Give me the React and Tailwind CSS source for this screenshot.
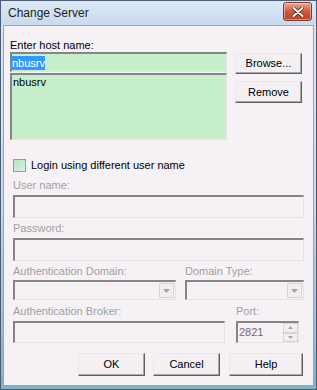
const sunken =
  'border-t-2 border-l-2 border-b border-r border-t-[#858585] border-l-[#858585] border-b-[#e6e2e5] border-r-[#e6e2e5]';

function Btn({ children, className = '' }) {
  return (
    <div
      className={`flex items-center justify-center border border-t-[#e9e9e9] border-l-[#e9e9e9] border-r-[#5e5e5e] border-b-[#5e5e5e] bg-[#f3eff2] shadow-[inset_-1px_-1px_0_#a9a9a9] text-[#000] ${className}`}
    >
      {children}
    </div>
  );
}

function Combo({ className = '' }) {
  return (
    <div className={`flex h-[20px] ${sunken} bg-[#f4f0f3] ${className}`}>
      <div className="flex-1" />
      <div className="m-[1px] flex w-[15px] items-center justify-center border border-[#d8d4d7] bg-[#f1eef0]">
        <svg width="7" height="4" viewBox="0 0 7 4">
          <path d="M0 0h7L3.5 4z" fill="#a5a5a5" />
        </svg>
      </div>
    </div>
  );
}

function Label({ children, className = '' }) {
  return <div className={`h-[14px] leading-[14px] text-[#a3a0a2] ${className}`}>{children}</div>;
}

export default function App() {
  return (
    <div className="h-[390px] w-[317px] overflow-hidden bg-[#c5d7ec] font-['Liberation_Sans',Arial,sans-serif] text-[11px]">
      <div className="flex h-full flex-col border border-[#4a5d75] bg-gradient-to-b from-[#dde8f5] via-[#c9daee] to-[#7fb3c8]">
        {/* title bar */}
        <div className="flex h-[24px] items-center bg-gradient-to-b from-[#dde8f5] to-[#c9daee] pl-[7px] pr-[4px]">
          <span className="flex-1 text-[12px] text-[#1e1e1e]">Change Server</span>
          <div className="mt-[-3px] flex h-[19px] w-[29px] items-center justify-center rounded-[3px] border border-[#7a3a30] bg-gradient-to-b from-[#e9a99c] via-[#d0573f] to-[#c14126] shadow-[inset_0_0_0_1px_rgba(255,255,255,0.4)]">
            <svg width="12" height="10" viewBox="0 0 12 10">
              <path d="M1.5 1l9 8M10.5 1l-9 8" stroke="#4a1a10" strokeWidth="3.4" strokeLinecap="round" />
              <path d="M1.5 1l9 8M10.5 1l-9 8" stroke="#fff" strokeWidth="2" strokeLinecap="round" />
            </svg>
          </div>
        </div>

        {/* client */}
        <div className="mx-[2px] mb-[3px] flex-1 border border-[#8fa5bf] bg-[#f5f1f4] pl-[6px] pr-[9px]">
          <div className="flex pt-[13px]">
            <div className="w-[217px]">
              <div className="h-[13px] leading-[13px] text-black">Enter host name:</div>
              <div className={`h-[20px] ${sunken} bg-[#c7eecb] pt-[1px]`}>
                <span className="inline-block bg-[#3399ff] leading-[14px] text-white">nbusrv</span>
              </div>
              <div className={`mt-[1px] h-[67px] ${sunken} bg-[#c7eecb] pl-[1px] leading-[14px] text-black`}>
                nbusrv
              </div>
            </div>
            <div className="ml-[8px] w-[67px] pt-[14px]">
              <Btn className="h-[21px]">Browse...</Btn>
              <Btn className="mt-[7px] h-[22px]">Remove</Btn>
            </div>
          </div>

          <div className="pl-[3px]">
            <div className="mt-[19px] flex h-[13px] items-center">
              <div className="h-[13px] w-[13px] border border-[#9a9a9a] bg-gradient-to-br from-[#b8e2c0] to-[#d6f3dc]" />
              <span className="ml-[5px] text-black">Login using different user name</span>
            </div>

            <Label className="mt-[6px]">User name:</Label>
            <div className={`mt-[3px] h-[23px] ${sunken}`} />

            <Label className="mt-[3px]">Password:</Label>
            <div className={`mt-[3px] h-[23px] ${sunken}`} />

            <div className="mt-[3px] flex">
              <div className="w-[163px]">
                <Label>Authentication Domain:</Label>
                <Combo className="mt-[2px]" />
              </div>
              <div className="ml-[9px] flex-1">
                <Label>Domain Type:</Label>
                <Combo className="mt-[2px]" />
              </div>
            </div>

            <div className="mt-[4px] flex">
              <div className="w-[212px]">
                <Label>Authentication Broker:</Label>
                <div className={`mt-[3px] h-[22px] ${sunken}`} />
              </div>
              <div className="ml-[11px] w-[63px]">
                <Label>Port:</Label>
                <div className={`mt-[3px] flex h-[22px] ${sunken}`}>
                  <span className="flex-1 pl-[1px] leading-[18px] text-[#6f6d6e]">2821</span>
                  <div className="flex w-[15px] flex-col">
                    <div className="flex flex-1 items-center justify-center border border-[#d8d4d7] bg-[#f1eef0]">
                      <svg width="5" height="3" viewBox="0 0 5 3"><path d="M0 3h5L2.5 0z" fill="#a5a5a5" /></svg>
                    </div>
                    <div className="flex flex-1 items-center justify-center border border-[#d8d4d7] bg-[#f1eef0]">
                      <svg width="5" height="3" viewBox="0 0 5 3"><path d="M0 0h5L2.5 3z" fill="#a5a5a5" /></svg>
                    </div>
                  </div>
                </div>
              </div>
            </div>
          </div>

          <div className="mt-[10px] flex justify-end pr-[1px]">
            <Btn className="h-[23px] w-[67px]">OK</Btn>
            <Btn className="ml-[8px] h-[23px] w-[67px]">Cancel</Btn>
            <Btn className="ml-[9px] h-[23px] w-[74px]">Help</Btn>
          </div>
        </div>
      </div>
    </div>
  );
}
